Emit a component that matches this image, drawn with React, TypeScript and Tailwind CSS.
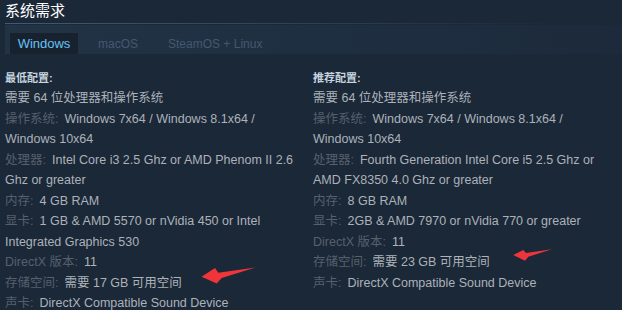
const minimum: [string, string][] = [
  ["", "需要 64 位处理器和操作系统"],
  ["操作系统:", "Windows 7x64 / Windows 8.1x64 / Windows 10x64"],
  ["处理器:", "Intel Core i3 2.5 Ghz or AMD Phenom II 2.6 Ghz or greater"],
  ["内存:", "4 GB RAM"],
  ["显卡:", "1 GB & AMD 5570 or nVidia 450 or Intel Integrated Graphics 530"],
  ["DirectX 版本:", "11"],
  ["存储空间:", "需要 17 GB 可用空间"],
  ["声卡:", "DirectX Compatible Sound Device"],
]

const recommended: [string, string][] = [
  ["", "需要 64 位处理器和操作系统"],
  ["操作系统:", "Windows 7x64 / Windows 8.1x64 / Windows 10x64"],
  ["处理器:", "Fourth Generation Intel Core i5 2.5 Ghz or AMD FX8350 4.0 Ghz or greater"],
  ["内存:", "8 GB RAM"],
  ["显卡:", "2GB & AMD 7970 or nVidia 770 or greater"],
  ["DirectX 版本:", "11"],
  ["存储空间:", "需要 23 GB 可用空间"],
  ["声卡:", "DirectX Compatible Sound Device"],
]

function ReqColumn({ title, rows }: { title: string; rows: [string, string][] }) {
  return (
    <div>
      <p className="mb-[1px] text-[11px] font-bold leading-[17px] text-[#c6d4df]">{title}</p>
      <ul className="text-[12.5px] leading-[20.5px] text-[#acb2b8]">
        {rows.map(([label, value], i) => (
          <li key={i}>
            {label && <span className="mr-[6px] text-[#56606c]">{label}</span>}
            {value}
          </li>
        ))}
      </ul>
    </div>
  )
}

export default function App() {
  return (
    <div
      className="relative h-[310px] w-[622px] overflow-hidden bg-[#1b2838] pl-[5px]"
      style={{ fontFamily: '"Liberation Sans", Arial, "Noto Sans CJK SC", sans-serif' }}
    >
      <h2 className="pt-[1px] text-[15px] leading-[20px] text-white">系统需求</h2>
      <div className="mt-[2px] h-px w-[555px] bg-gradient-to-r from-[#3f5a72] via-[#2e4358] to-transparent" />

      <div className="mt-[1px] flex h-[29px] items-end bg-gradient-to-r from-[#223346] via-[#1f2f42] to-[#1c2a3b] pl-[5px] text-[12px]">
        <div className="flex h-[21px] w-[68px] items-center justify-center bg-[#18222f] text-[13px] text-[#67c1f5]">Windows</div>
        <div className="flex h-[21px] items-center px-[20px] text-[#44596d]">macOS</div>
        <div className="flex h-[21px] items-center px-[10px] text-[#44596d]">SteamOS + Linux</div>
      </div>

      <div className="mt-[16px] grid grid-cols-[300px_300px] gap-[8px]">
        <ReqColumn title="最低配置:" rows={minimum} />
        <ReqColumn title="推荐配置:" rows={recommended} />
      </div>

      <svg className="pointer-events-none absolute left-0 top-0" width="622" height="310">
        <polygon
          fill="#f0353a"
          points="201.5,276.7 215,268 218.3,272.8 255.5,267.5 221.7,277.9 216.7,283.6"
        />
        <polygon
          fill="#f0353a"
          points="513.3,255 523.3,250 526,253 552,249.3 528.3,256.7 525,260.7"
        />
      </svg>
    </div>
  )
}
